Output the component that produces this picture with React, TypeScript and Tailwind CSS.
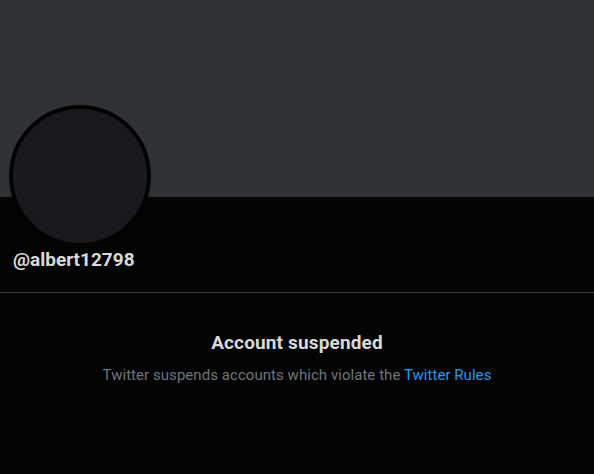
export default function App() {
  return (
    <div className="w-[594px] h-[474px] bg-[#030303] overflow-hidden" style={{ fontFamily: 'Roboto, "Liberation Sans", sans-serif' }}>
      <div className="h-[197px] bg-[#2f3336]" />
      <div className="px-[9px]">
        <div className="-mt-[92px] w-[142px] h-[142px] rounded-full border-[4px] border-[#030303] bg-[#17191d]" />
        <div className="mt-[1px] pl-[4px] text-[19px] leading-[24px] font-bold text-[#d9d9d9]">@albert12798</div>
      </div>
      <div className="mt-[20px] h-px bg-[#3a3d40]" />
      <div className="mt-[38px] flex flex-col items-center">
        <div className="text-[19px] leading-[24px] font-bold tracking-[0.15px] text-[#d9d9d9]">Account suspended</div>
        <div className="mt-[10px] text-[15px] leading-[20px] tracking-[0.05px] text-[#6e767d]">
          Twitter suspends accounts which violate the <span className="text-[#1d9bf0]">Twitter Rules</span>
        </div>
      </div>
    </div>
  );
}
